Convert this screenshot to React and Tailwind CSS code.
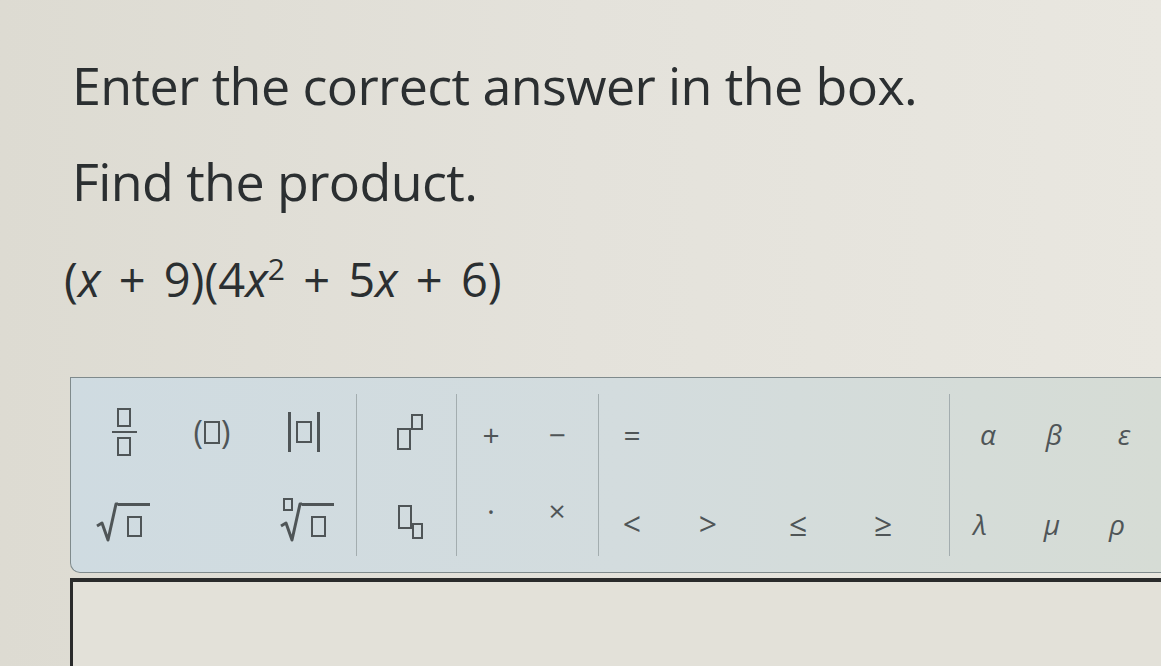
import React from 'react';

const font = { fontFamily: '"Open Sans", "Noto Sans", sans-serif' };

function Box({ className = 'w-[14px] h-[19px]' }) {
  return <span className={`inline-block border-[2.5px] border-[#4f5557] ${className}`} />;
}

function Fraction() {
  return (
    <span className="flex flex-col items-center gap-[4px]">
      <Box className="w-[14px] h-[19px]" />
      <span className="block w-[25px] h-[2.5px] bg-[#4f5557]" />
      <Box className="w-[14px] h-[19px]" />
    </span>
  );
}

function Paren() {
  return (
    <span className="flex items-center text-[32px] leading-none text-[#4f5557] font-medium">
      (<Box className="mx-[1px] w-[16px] h-[23px]" />)
    </span>
  );
}

function Abs() {
  return (
    <span className="flex items-center gap-[5px]">
      <span className="block w-[3px] h-[40px] bg-[#4f5557]" />
      <Box className="w-[16px] h-[22px]" />
      <span className="block w-[3px] h-[40px] bg-[#4f5557]" />
    </span>
  );
}

function Sup() {
  return (
    <span className="flex items-start">
      <Box className="w-[14px] h-[22px] mt-[14px]" />
      <Box className="w-[12px] h-[16px]" />
    </span>
  );
}

function Sub() {
  return (
    <span className="flex items-start">
      <Box className="w-[14px] h-[24px]" />
      <Box className="w-[11px] h-[16px] mt-[18px]" />
    </span>
  );
}

function Root({ index }) {
  return (
    <span className="relative flex items-end">
      {index && <Box className="absolute left-[3px] top-[-3px] w-[10px] h-[13px]" />}
      <svg width="22" height="42" viewBox="0 0 22 42" className="block">
        <path d="M1 25 L6 22 L12 39 L20 3 L22 3" fill="none" stroke="#4f5557" strokeWidth="3" strokeLinejoin="round" />
      </svg>
      <span className="flex flex-col">
        <span className="block h-[3px] w-[32px] bg-[#4f5557] mt-[1px]" />
        <span className="flex justify-center mt-[10px] mb-[6px]">
          <Box className="w-[15px] h-[21px]" />
        </span>
      </span>
    </span>
  );
}

function Sym({ children, className = '' }) {
  return (
    <span className={`flex items-center justify-center text-[#4f5557] ${className}`}>{children}</span>
  );
}

function Column({ width, first, children }) {
  return (
    <div className={`${width} flex flex-col ${first ? '' : 'border-l-[1.5px] border-[#a3adaf]'} my-[16px]`}>
      {children}
    </div>
  );
}

function Row({ children, className = '' }) {
  return <div className={`flex items-center h-[60px] ${className}`}>{children}</div>;
}

export default function App() {
  return (
    <div className="w-[1161px] h-[666px] overflow-hidden bg-gradient-to-r from-[#dddbd2] via-[#e4e2db] to-[#e9e7e0] text-[#2b2f31]" style={font}>
      <div className="pl-[72px] pt-[55px]">
        <h1 className="text-[52px] leading-[60px] font-medium tracking-[-0.6px]">Enter the correct answer in the box.</h1>
        <p className="text-[52px] leading-[60px] mt-[36px] font-medium tracking-[-0.6px]">Find the product.</p>
        <p className="text-[47px] leading-[56px] mt-[40px] ml-[-8px] [word-spacing:6px]">
          (<i>x</i> + 9)(4<i>x</i><sup className="text-[30px] relative top-[-17px] align-baseline">2</sup> + 5<i>x</i> + 6)
        </p>
      </div>

      <div className="ml-[70px] mt-[70px] h-[196px] flex bg-gradient-to-r from-[#cfdbe1] via-[#d3dcde] to-[#d6dcd5] border-[1.5px] border-r-0 border-[#7f8a8c] rounded-bl-[10px]">
        <Column width="w-[285px]" first>
          <Row className="mt-[8px]">
            <Sym className="w-[50px] ml-[28px]"><Fraction /></Sym>
            <Sym className="w-[50px] ml-[38px]"><Paren /></Sym>
            <Sym className="w-[50px] ml-[42px]"><Abs /></Sym>
          </Row>
          <Row className="mt-[30px]">
            <Sym className="w-[60px] ml-[22px]"><Root /></Sym>
            <Sym className="w-[60px] ml-[124px]"><Root index /></Sym>
          </Row>
        </Column>
        <Column width="w-[100px]">
          <Row className="mt-[8px]">
            <Sym className="w-[50px] ml-[28px]"><Sup /></Sym>
          </Row>
          <Row className="mt-[30px]">
            <Sym className="w-[50px] ml-[28px]"><Sub /></Sym>
          </Row>
        </Column>
        <Column width="w-[142px]">
          <Row className="mt-[10px] text-[30px] font-medium">
            <Sym className="w-[30px] ml-[19px]">+</Sym>
            <Sym className="w-[30px] ml-[36px]">−</Sym>
          </Row>
          <Row className="mt-[16px] text-[30px] font-medium">
            <Sym className="w-[30px] ml-[19px]">·</Sym>
            <Sym className="w-[30px] ml-[36px]">×</Sym>
          </Row>
        </Column>
        <Column width="w-[351px]">
          <Row className="mt-[10px] text-[30px] font-medium">
            <Sym className="w-[30px] ml-[18px]">=</Sym>
          </Row>
          <Row className="mt-[30px] text-[32px]">
            <Sym className="w-[30px] ml-[18px]">&lt;</Sym>
            <Sym className="w-[30px] ml-[46px]">&gt;</Sym>
            <Sym className="w-[30px] ml-[60px]">≤</Sym>
            <Sym className="w-[30px] ml-[55px]">≥</Sym>
          </Row>
        </Column>
        <Column width="flex-1">
          <Row className="mt-[10px] text-[28px] italic font-medium">
            <Sym className="w-[30px] ml-[23px]">α</Sym>
            <Sym className="w-[30px] ml-[36px]">β</Sym>
            <Sym className="w-[30px] ml-[40px]">ε</Sym>
          </Row>
          <Row className="mt-[30px] text-[28px] italic font-medium">
            <Sym className="w-[30px] ml-[15px]">λ</Sym>
            <Sym className="w-[30px] ml-[42px]">μ</Sym>
            <Sym className="w-[30px] ml-[35px]">ρ</Sym>
          </Row>
        </Column>
      </div>

      <div className="ml-[70px] mt-[5px] h-[200px] border-l-[3px] border-t-[4px] border-[#2a2b2b] bg-[#e3e1d9]" />
    </div>
  );
}
